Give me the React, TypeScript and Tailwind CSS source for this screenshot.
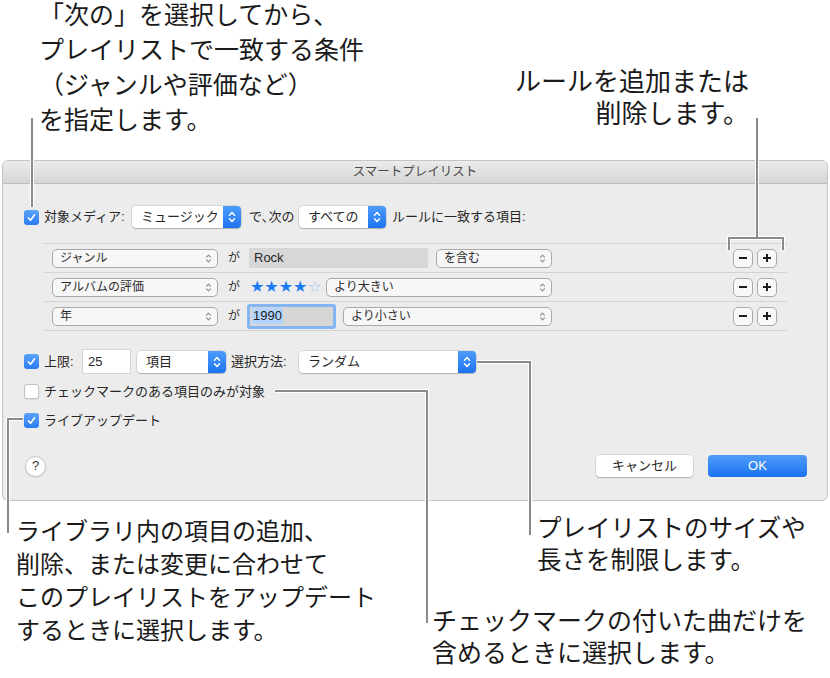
import React from 'react';

const Chevrons = ({ className }: { className?: string }) => (
  <svg viewBox="0 0 8 14" className={className} fill="none" stroke="currentColor" strokeWidth={1.5} strokeLinecap="round" strokeLinejoin="round">
    <path d="M1.5 5.2 L4 2.6 L6.5 5.2" />
    <path d="M1.5 8.8 L4 11.4 L6.5 8.8" />
  </svg>
);

function Checkbox({ checked }: { checked: boolean }) {
  if (!checked) {
    return <span className="block w-[15px] h-[15px] shrink-0 rounded-[3px] bg-white border border-[#c2c2c2] shadow-[0_0.5px_1px_rgba(0,0,0,0.08)]" />;
  }
  return (
    <span className="flex w-[15px] h-[15px] shrink-0 items-center justify-center rounded-[3px] bg-gradient-to-b from-[#5aa2fa] to-[#2b7cf4]">
      <svg viewBox="0 0 12 12" className="w-[11px] h-[11px]" fill="none" stroke="white" strokeWidth={1.7} strokeLinecap="round" strokeLinejoin="round">
        <path d="M2.6 6.4 L5 8.9 L9.4 3.1" />
      </svg>
    </span>
  );
}

function BluePopup({ label, width }: { label: string; width: string }) {
  return (
    <div className={`flex h-[22px] shrink-0 ${width} overflow-hidden rounded-[4px] bg-white shadow-[0_0_0_0.5px_rgba(0,0,0,0.18),0_1px_1px_rgba(0,0,0,0.18)]`}>
      <span className="flex-1 pl-[9px] text-[13px] leading-[22px] text-[#262626] whitespace-nowrap">{label}</span>
      <span className="flex w-[18px] items-center justify-center bg-gradient-to-b from-[#4d9cfa] to-[#1c73f0] text-white">
        <Chevrons className="w-[8px] h-[14px]" />
      </span>
    </div>
  );
}

function RulePopup({ label, width }: { label: string; width: string }) {
  return (
    <div className={`flex h-[19px] shrink-0 ${width} items-center rounded-[5px] border border-[#a9a9a9] bg-[#f7f7f7] pl-[7px] pr-[5px]`}>
      <span className="flex-1 text-[12px] leading-[17px] text-[#2b2b2b] whitespace-nowrap">{label}</span>
      <Chevrons className="w-[7px] h-[11px] text-[#8f8f8f]" />
    </div>
  );
}

function SquareButton({ plus }: { plus?: boolean }) {
  return (
    <span className="flex w-[20px] h-[19px] items-center justify-center rounded-[5px] border border-[#a9a9a9] bg-[#f8f8f8]">
      <svg viewBox="0 0 10 10" className="w-[10px] h-[10px]" stroke="#1e1e1e" strokeWidth={2}>
        <path d="M1 5 H9" />
        {plus && <path d="M5 1 V9" />}
      </svg>
    </span>
  );
}

const Ga = ({ width }: { width: string }) => (
  <span className={`${width} shrink-0 pl-[10px] text-[12px] text-[#2b2b2b]`}>が</span>
);

export default function App() {
  return (
    <div className="relative w-[830px] h-[678px] overflow-hidden bg-white text-[#1a1a1a] font-[family-name:'Liberation_Sans','Noto_Sans_CJK_JP',sans-serif]">
      {/* top callouts */}
      <div className="flex h-[160px] justify-between">
        <p className="-mt-[2px] pl-[39px] text-[25px] leading-[35px] whitespace-nowrap">
          「次の」を選択してから、<br />
          プレイリストで一致する条件<br />
          （ジャンルや評価など）<br />
          を指定します。
        </p>
        <p className="pt-[66px] pr-[81px] text-right text-[26px] leading-[32px] whitespace-nowrap">
          ルールを追加または<br />
          削除します。
        </p>
      </div>

      {/* dialog */}
      <div className="ml-[2px] w-[826px] h-[341px] overflow-hidden rounded-[6px] border border-[#c4c4c4] bg-[#ececec]">
        <div className="flex h-[23px] items-center justify-center border-b border-[#bdbdbd] bg-gradient-to-b from-[#ebebeb] to-[#d6d6d6] text-[12.5px] text-[#4a4a4a]">
          スマートプレイリスト
        </div>

        <div className="flex flex-col pl-[21px] pt-[22px] text-[13px] text-[#262626]">
          <div className="flex h-[22px] items-center">
            <Checkbox checked />
            <span className="ml-[5px] w-[88px] shrink-0 whitespace-nowrap">対象メディア:</span>
            <BluePopup label="ミュージック" width="w-[109px]" />
            <span className="ml-[8px] w-[50px] shrink-0 whitespace-nowrap">で､次の</span>
            <BluePopup label="すべての" width="w-[87px]" />
            <span className="ml-[6px] whitespace-nowrap">ルールに一致する項目:</span>
          </div>

          <div className="mt-[15px] ml-[20px] w-[743px]">
            <div className="flex h-[29px] items-center border-t border-[#d3d3d3] pl-[8px] pr-[10px]">
              <RulePopup label="ジャンル" width="w-[166px]" />
              <Ga width="w-[31px]" />
              <span className="flex h-[20px] w-[179px] items-center bg-[#d7d7d7] pl-[5px] text-[13px] text-[#262626]">Rock</span>
              <span className="ml-[8px]"><RulePopup label="を含む" width="w-[116px]" /></span>
              <span className="ml-auto flex gap-[4px]"><SquareButton /><SquareButton plus /></span>
            </div>
            <div className="flex h-[29px] items-center border-t border-[#d3d3d3] pl-[8px] pr-[10px]">
              <RulePopup label="アルバムの評価" width="w-[166px]" />
              <Ga width="w-[32px]" />
              <span className="w-[76px] shrink-0 text-[16px] leading-[20px] text-[#1b7bf6] font-['DejaVu_Sans',sans-serif]">
                ★★★★<span className="text-[#a9cbf6]">☆</span>
              </span>
              <RulePopup label="より大きい" width="w-[226px]" />
              <span className="ml-auto flex gap-[4px]"><SquareButton /><SquareButton plus /></span>
            </div>
            <div className="flex h-[30px] items-center border-t border-b border-[#d3d3d3] pl-[8px] pr-[10px]">
              <RulePopup label="年" width="w-[166px]" />
              <Ga width="w-[29px]" />
              <span className="flex h-[25px] w-[89px] shrink-0 items-center rounded-[3px] border-[3px] border-[#83b4f4] bg-[#d6d6d6] pl-[2px]">
                <span className="bg-[#b3d5fd] px-[1px] text-[13px] leading-[16px] text-[#1a1a1a]">1990</span>
              </span>
              <span className="ml-[7px]"><RulePopup label="より小さい" width="w-[209px]" /></span>
              <span className="ml-auto flex gap-[4px]"><SquareButton /><SquareButton plus /></span>
            </div>
          </div>

          <div className="mt-[19px] flex h-[23px] items-center">
            <Checkbox checked />
            <span className="ml-[5px] w-[39px] shrink-0">上限:</span>
            <span className="flex h-[23px] w-[47px] shrink-0 items-center bg-white pl-[5px] shadow-[0_0_0_0.5px_rgba(0,0,0,0.2)]">25</span>
            <span className="ml-[7px]"><BluePopup label="項目" width="w-[89px]" /></span>
            <span className="ml-[5px] w-[68px] shrink-0 whitespace-nowrap">選択方法:</span>
            <BluePopup label="ランダム" width="w-[177px]" />
          </div>

          <div className="mt-[11px] flex h-[15px] items-center">
            <Checkbox checked={false} />
            <span className="ml-[5px] whitespace-nowrap">チェックマークのある項目のみが対象</span>
          </div>

          <div className="mt-[14px] flex h-[15px] items-center">
            <Checkbox checked />
            <span className="ml-[5px] whitespace-nowrap">ライブアップデート</span>
          </div>

          <div className="mt-[27px] mr-[20px] flex h-[22px] items-center">
            <span className="ml-[1px] flex h-[21px] w-[21px] items-center justify-center rounded-full border border-[#c6c6c6] bg-white text-[13px] text-[#333] shadow-[0_1px_1px_rgba(0,0,0,0.1)]">?</span>
            <span className="ml-auto flex h-[22px] w-[97px] items-center justify-center rounded-[4px] bg-white text-[13px] shadow-[0_0_0_0.5px_rgba(0,0,0,0.18),0_1px_1px_rgba(0,0,0,0.18)]">キャンセル</span>
            <span className="ml-[15px] flex h-[22px] w-[99px] items-center justify-center rounded-[4px] bg-gradient-to-b from-[#4f9dfa] to-[#1a72f1] text-[13px] text-white">OK</span>
          </div>
        </div>
      </div>

      {/* bottom callouts */}
      <div className="flex">
        <p className="w-[432px] shrink-0 pl-[16px] pt-[14px] text-[24px] leading-[33px] whitespace-nowrap">
          ライブラリ内の項目の追加、<br />
          削除、または変更に合わせて<br />
          このプレイリストをアップデート<br />
          するときに選択します。
        </p>
        <div className="flex flex-col">
          <p className="ml-[105px] pt-[12px] text-[24.5px] leading-[32px] whitespace-nowrap">
            プレイリストのサイズや<br />
            長さを制限します。
          </p>
          <p className="mt-[28px] text-[25px] leading-[32px] whitespace-nowrap">
            チェックマークの付いた曲だけを<br />
            含めるときに選択します。
          </p>
        </div>
      </div>

      {/* leader lines */}
      <svg className="pointer-events-none absolute left-0 top-0 w-[830px] h-[678px]" viewBox="0 0 830 678" fill="none">
        <g stroke="#ffffff" strokeWidth={4}>
          <path d="M32 118 V207" />
          <path d="M757 118 V238 M729 250 V238 H783 V250" />
          <path d="M23 419 H8 V533" />
          <path d="M275 391 H427 V623" />
          <path d="M477 362 H530 V535" />
        </g>
        <g stroke="#8a8a8a" strokeWidth={2}>
          <path d="M32 118 V207" />
          <path d="M757 118 V238 M729 250 V238 H783 V250" />
          <path d="M23 419 H8 V533" />
          <path d="M275 391 H427 V623" />
          <path d="M477 362 H530 V535" />
        </g>
      </svg>
    </div>
  );
}
